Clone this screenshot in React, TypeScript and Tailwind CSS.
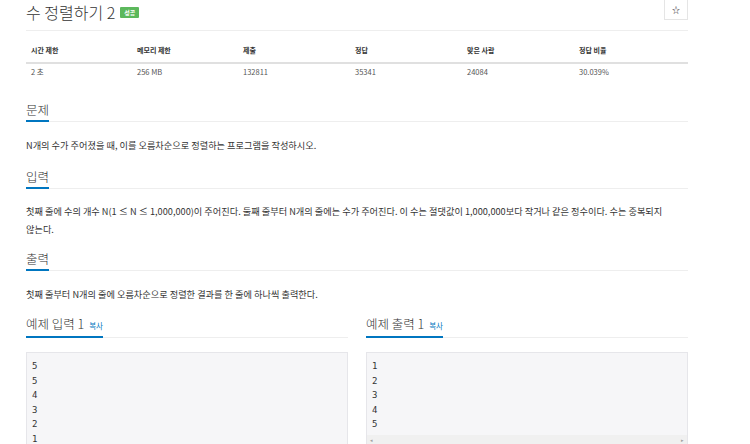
import React from "react";

const font = { fontFamily: '"Noto Sans CJK KR", "Noto Sans", sans-serif' };
const mono = { fontFamily: '"DejaVu Sans Mono", monospace' };

const stats = [
  ["시간 제한", "2 초"],
  ["메모리 제한", "256 MB"],
  ["제출", "132811"],
  ["정답", "35341"],
  ["맞은 사람", "24084"],
  ["정답 비율", "30.039%"],
];

function Heading({ children }: { children: React.ReactNode }) {
  return (
    <div className="flex border-b border-[#eeeeee]">
      <div className="-mb-px flex items-baseline border-b-2 border-[#0076c0] pb-[1px] text-[12.5px] font-light leading-[18px] text-[#333]">{children}</div>
    </div>
  );
}

function SampleHeading({ title }: { title: string }) {
  return (
    <Heading>
      <span>{title}</span>
      <span className="ml-[5px] text-[7.5px] font-normal text-[#0076c0]">복사</span>
    </Heading>
  );
}

export default function App() {
  return (
    <div className="h-[444px] w-[750px] overflow-hidden bg-white" style={font}>
      <div className="ml-[26px] w-[662px]">
        <div className="flex h-[31px] items-start justify-between border-b border-[#eeeeee]">
          <div className="flex items-center pt-[2px]">
            <span className="text-[16px] font-light leading-[20px] text-[#333]">수 정렬하기 2</span>
            <span className="ml-[5px] rounded-[1px] bg-[#5cb85c] px-[4px] text-[6px] font-bold leading-[11px] text-white">성공</span>
          </div>
          <div className="-mt-[3px] flex h-[23px] w-[24px] items-center justify-center border border-[#e5e5e5] pt-[2px] text-[8px] text-[#222]">☆</div>
        </div>

        <div className="grid grid-cols-[106px_106px_112px_112px_112px_1fr]">
          {stats.map(([h]) => (
            <div key={h} className="border-b-2 border-[#e0e0e0] pl-[5px] pt-[12px] pb-[5px] text-[7px] font-bold leading-[14px] text-[#333]">{h}</div>
          ))}
          {stats.map(([h, v]) => (
            <div key={h + "v"} className="pl-[5px] pt-[1px] pb-[4px] text-[7.5px] leading-[14px] text-[#555]">{v}</div>
          ))}
        </div>

        <div className="mt-[18px]">
          <Heading>문제</Heading>
          <p className="mt-[14px] break-keep text-[9.2px] leading-[18px] text-[#333]">
            N개의 수가 주어졌을 때, 이를 오름차순으로 정렬하는 프로그램을 작성하시오.
          </p>
        </div>

        <div className="mt-[14px]">
          <Heading>입력</Heading>
          <p className="mt-[13px] break-keep text-[9.2px] leading-[18px] text-[#333]">
            첫째 줄에 수의 개수 N(1 ≤ N ≤ 1,000,000)이 주어진다. 둘째 줄부터 N개의 줄에는 수가 주어진다. 이 수는 절댓값이 1,000,000보다 작거나 같은 정수이다. 수는 중복되지 않는다.
          </p>
        </div>

        <div className="mt-[12px]">
          <Heading>출력</Heading>
          <p className="mt-[14px] break-keep text-[9.2px] leading-[18px] text-[#333]">
            첫째 줄부터 N개의 줄에 오름차순으로 정렬한 결과를 한 줄에 하나씩 출력한다.
          </p>
        </div>

        <div className="mt-[12px] grid grid-cols-2 gap-[18px]">
          <div>
            <SampleHeading title="예제 입력 1" />
            <pre className="mt-[14px] h-[120px] border border-[#e6e6ea] bg-[#f6f6f8] px-[5px] pt-[6px] text-[9px] leading-[14.6px] text-[#333]" style={mono}>
              {"5\n5\n4\n3\n2\n1"}
            </pre>
          </div>
          <div>
            <SampleHeading title="예제 출력 1" />
            <div className="mt-[14px] border border-[#e6e6ea] bg-[#f6f6f8]">
              <pre className="px-[5px] pt-[6px] pb-[3px] text-[9px] leading-[14.6px] text-[#333]" style={mono}>
                {"1\n2\n3\n4\n5"}
              </pre>
              <div className="flex h-[9px] items-center justify-between bg-[#f0f0f0] px-[3px] text-[5px] leading-none text-[#a0a0a0]">
                <span>◂</span>
                <span>▸</span>
              </div>
            </div>
          </div>
        </div>
      </div>
    </div>
  );
}
